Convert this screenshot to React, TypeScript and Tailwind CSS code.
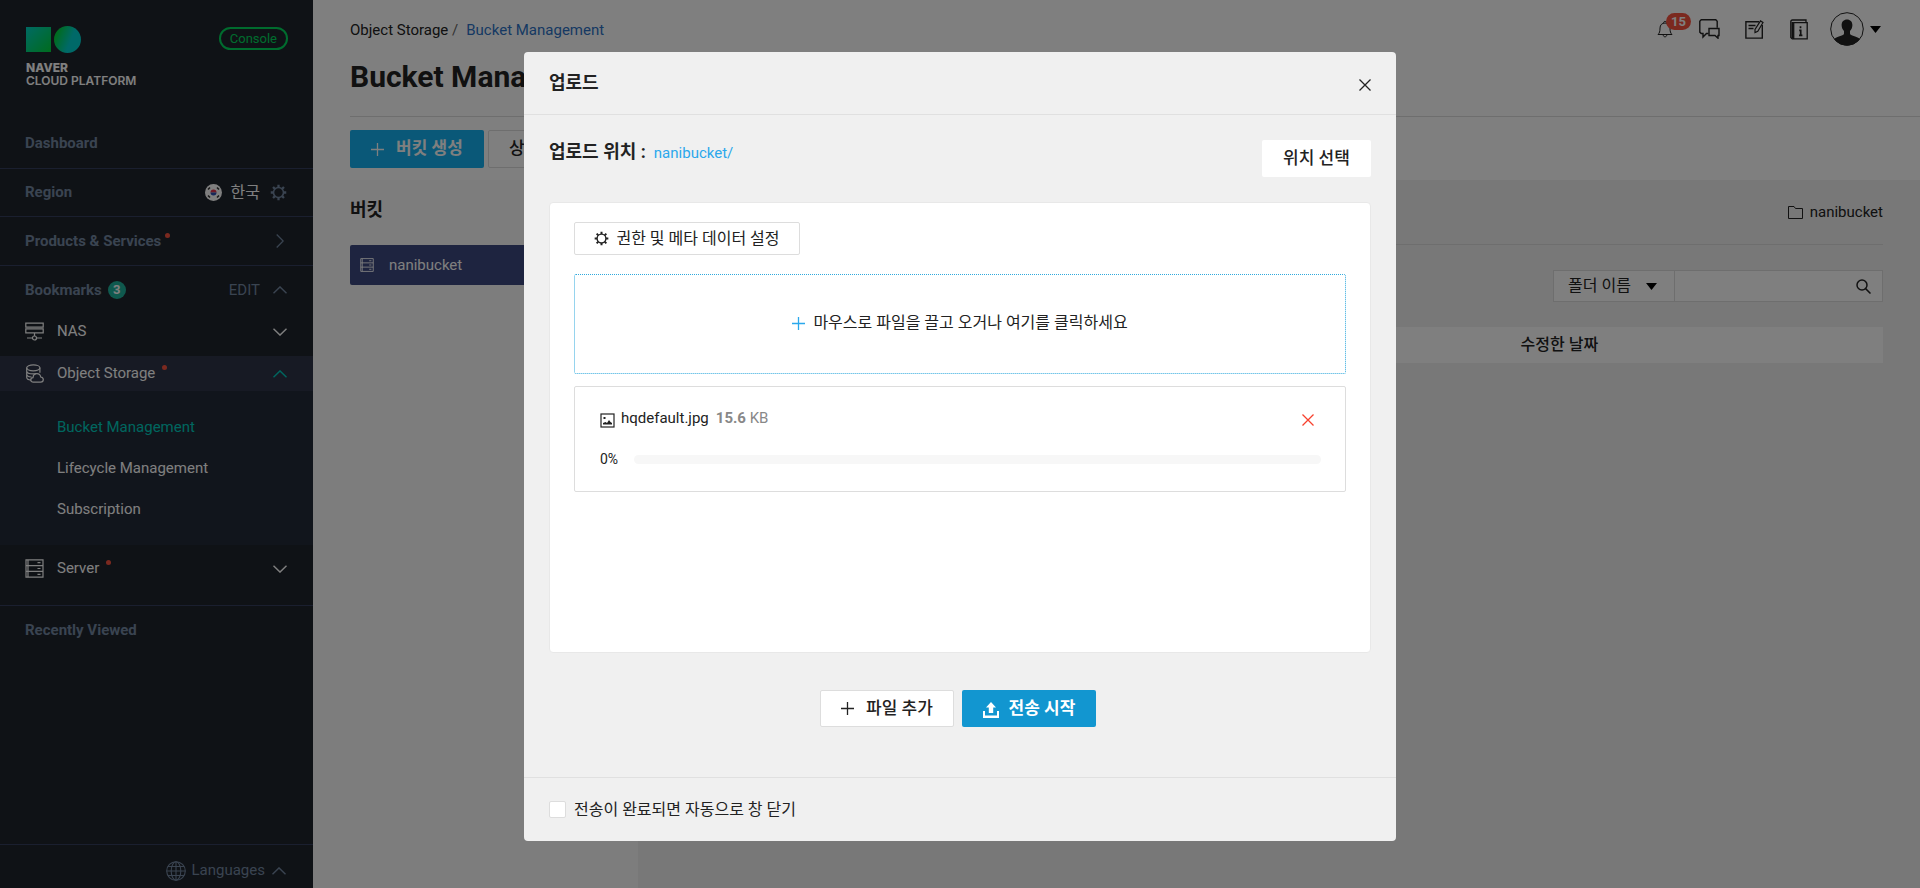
import type { ReactNode } from 'react';

function Chevron({ dir, className = '' }: { dir: 'up' | 'down' | 'right'; className?: string }) {
  if (dir === 'right') {
    return (
      <svg viewBox="0 0 8 14" className={`h-[14px] w-2 ${className}`} fill="none" stroke="currentColor" strokeWidth="1.3">
        <path d="M0.7 0.5 7.2 7 0.7 13.5" />
      </svg>
    );
  }
  return (
    <svg viewBox="0 0 14 8" className={`h-2 w-[14px] ${className}`} fill="none" stroke="currentColor" strokeWidth="1.4">
      <path d={dir === 'up' ? 'M0.5 7.3 7 0.9l6.5 6.4' : 'M0.5 0.7 7 7.1l6.5-6.4'} />
    </svg>
  );
}

function Gear({ className = '' }: { className?: string }) {
  return (
    <svg viewBox="0 0 18 18" className={className} fill="none" stroke="currentColor">
      <circle cx="9" cy="9" r="5.3" strokeWidth="1.7" />
      <path
        strokeWidth="2.4"
        d="M9 3.600V.8M9 14.400v2.800M3.600 9H.8M14.400 9h2.800M5.200 5.200 3.200 3.200M12.800 12.800l2 2M5.200 12.800l-2 2M12.800 5.200l2-2"
      />
    </svg>
  );
}

function Plus({ className = '' }: { className?: string }) {
  return (
    <svg viewBox="0 0 13 13" className={`size-[13px] ${className}`} fill="none" stroke="currentColor" strokeWidth="1.3">
      <path d="M6.5 0v13M0 6.5h13" />
    </svg>
  );
}

function Cross({ className = '' }: { className?: string }) {
  return (
    <svg viewBox="0 0 12 12" className={`size-3 ${className}`} fill="none" stroke="currentColor" strokeWidth="1.3">
      <path d="M0.5 0.5l11 11M11.5 0.5l-11 11" />
    </svg>
  );
}

function Caret() {
  return (
    <svg viewBox="0 0 11 7" className="h-[7px] w-[11px]" fill="currentColor">
      <path d="M0 0h11L5.5 7z" />
    </svg>
  );
}

function NasIcon() {
  return (
    <svg viewBox="0 0 19 19" className="size-[19px]" fill="none" stroke="currentColor" strokeWidth="1.2">
      <path d="M.8 1.1h17.4v4H.8zM.8 6.9h17.4v4H.8zM9.5 11v3M2 16h5.5M11.5 16H17" />
      <circle cx="9.5" cy="16" r="2" />
    </svg>
  );
}

function ObjectStorageIcon() {
  return (
    <svg viewBox="0 0 19 19" className="size-[19px]" fill="none" stroke="currentColor" strokeWidth="1.2">
      <ellipse cx="8.3" cy="3.8" rx="6.6" ry="3" />
      <path d="M1.7 3.8v9.4c0 1.5 2 2.700 4.300 2.900M14.900 3.800v5M1.700 7c0 1.600 2.900 2.900 6.600 2.900 1 0 1.800-.1 2.600-.3M1.700 10.200c0 1.400 2 2.500 4.800 2.800" />
      <path d="M8.300 18.200c-1.500 0-2.500-1-2.500-2.300 0-1.200.9-2.100 2.200-2.200.2-2.300 1.800-4 3.900-4 2 0 3.500 1.400 3.800 3.300 1.500.2 2.600 1.200 2.600 2.600 0 1.500-1.200 2.600-2.700 2.600z" />
    </svg>
  );
}

function ServerIcon({ className = '' }: { className?: string }) {
  return (
    <svg viewBox="0 0 19 19" className={className} fill="none" stroke="currentColor" strokeWidth="1.2">
      <path d="M1 .8h17v17.400H1zM3 .8v17.400M1 6.600h17M1 12.400h17M12.500 3.700h3M12.500 9.500h3M12.500 15.300h3" />
    </svg>
  );
}

function GlobeIcon() {
  return (
    <svg viewBox="0 0 20 20" className="size-5" fill="none" stroke="currentColor" strokeWidth="1.1">
      <circle cx="10" cy="10" r="9.300" />
      <ellipse cx="10" cy="10" rx="4.800" ry="9.300" />
      <path d="M10 .7v18.600M.7 10h18.600M2 5.500h16M2 14.500h16" />
    </svg>
  );
}

function KoreaFlag() {
  return (
    <svg viewBox="0 0 17 17" className="size-[17px]">
      <circle cx="8.5" cy="8.5" r="8.5" fill="#fff" />
      <path d="M5.500 8.500a3 3 0 0 1 6 0z" fill="#e0324b" />
      <path d="M5.500 8.500a3 3 0 0 0 6 0z" fill="#2c4fb0" />
      <path d="M3 5.500 5 3.500M14 5.500l-2-2M3 11.500l2 2M14 11.500l-2 2" stroke="#333" strokeWidth="1.600" />
    </svg>
  );
}

function Logo() {
  return (
    <svg viewBox="0 0 55 27" className="h-[27px] w-[55px]">
      <defs>
        <linearGradient id="sq" x1="0" y1="0" x2="1" y2="1">
          <stop offset="0" stopColor="#00d5c8" />
          <stop offset="1" stopColor="#00d83c" />
        </linearGradient>
        <linearGradient id="ci" x1="0" y1="0.200" x2="1" y2="0.600">
          <stop offset="0.100" stopColor="#00d83c" />
          <stop offset="0.650" stopColor="#00d3d0" />
        </linearGradient>
      </defs>
      <rect y="1" width="25" height="25" fill="url(#sq)" />
      <circle cx="41.500" cy="13.500" r="13.500" fill="url(#ci)" />
    </svg>
  );
}

function RedDot() {
  return <span className="mb-3 ml-1 size-[5px] rounded-full bg-[#f7523f]" />;
}

function SideSection({ children, className = '' }: { children: ReactNode; className?: string }) {
  return (
    <div className={`flex h-12 items-center pr-[26px] pl-[25px] text-[15px] font-bold text-[#7488a2] ${className}`}>
      {children}
    </div>
  );
}

function Sidebar() {
  return (
    <aside className="flex w-[313px] shrink-0 flex-col bg-[#1f252d] text-[15px] text-white">
      <div className="flex h-[118px] items-start justify-between pt-[26px] pr-[25px] pl-[26px]">
        <a href="#home" className="flex flex-col">
          <Logo />
          <span className="mt-2 font-['Inter',sans-serif] text-[12px] leading-[13px] font-extrabold">NAVER</span>
          <span className="font-['Inter',sans-serif] text-[12px] leading-[13px] font-semibold">CLOUD PLATFORM</span>
        </a>
        <a
          href="#console"
          className="mt-px flex h-[23px] items-center rounded-full border-2 border-[#00d85c] px-[9px] text-[13px] text-[#00d85c]"
        >
          Console
        </a>
      </div>

      <SideSection className="h-[50px]">
        <a href="#dashboard">Dashboard</a>
      </SideSection>
      <SideSection className="border-t border-[#353f5f]">
        <span>Region</span>
        <span className="ml-auto flex items-center">
          <KoreaFlag />
          <span className="ml-[9px] text-[16px] font-normal text-white">한국</span>
          <button type="button" aria-label="Region settings" className="ml-[10px]">
            <Gear className="size-[17px]" />
          </button>
        </span>
      </SideSection>
      <SideSection className="h-[49px] border-t border-[#353f5f]">
        <a href="#products">Products &amp; Services</a>
        <RedDot />
        <Chevron dir="right" className="mr-[3px] ml-auto" />
      </SideSection>
      <SideSection className="h-[49px] border-t border-[#353f5f]">
        <span>Bookmarks</span>
        <span className="ml-[6px] flex size-[18px] items-center justify-center rounded-full bg-[#1fb39c] text-[13px] text-white">
          3
        </span>
        <button type="button" className="ml-auto font-normal">
          EDIT
        </button>
        <Chevron dir="up" className="ml-[13px]" />
      </SideSection>

      <nav className="flex flex-col">
        <a href="#nas" className="mb-[7px] flex h-[35px] items-center pr-[26px] pl-[25px]">
          <NasIcon />
          <span className="ml-[13px]">NAS</span>
          <Chevron dir="down" className="ml-auto" />
        </a>
        <a href="#object-storage" className="flex h-[35px] items-center bg-[#2e3448] pr-[26px] pl-[25px]">
          <ObjectStorageIcon />
          <span className="ml-[13px]">Object Storage</span>
          <span className="ml-[3px] flex">
            <RedDot />
          </span>
          <Chevron dir="up" className="ml-auto text-[#00ccbe]" />
        </a>
        <div className="flex flex-col bg-[#232a38] pt-4 pb-[15px] pl-[57px]">
          <a href="#bucket" className="flex h-[41px] items-center text-[#00ccbe]">
            Bucket Management
          </a>
          <a href="#lifecycle" className="flex h-[41px] items-center">
            Lifecycle Management
          </a>
          <a href="#subscription" className="flex h-[41px] items-center">
            Subscription
          </a>
        </div>
        <a href="#server" className="mt-[6px] mb-[19px] flex h-[35px] items-center pr-[26px] pl-[25px]">
          <ServerIcon className="size-[19px]" />
          <span className="ml-[13px]">Server</span>
          <span className="ml-[3px] flex">
            <RedDot />
          </span>
          <Chevron dir="down" className="ml-auto" />
        </a>
      </nav>

      <SideSection className="h-[49px] border-t border-[#353f5f]">Recently Viewed</SideSection>

      <div className="mt-auto flex h-11 items-center justify-end border-t border-[#353f5f] pt-2 pr-[27px] text-[#7488a2]">
        <button type="button" className="flex items-center">
          <GlobeIcon />
          <span className="ml-[6px]">Languages</span>
          <Chevron dir="up" className="ml-[7px]" />
        </button>
      </div>
    </aside>
  );
}

function TopIcons() {
  return (
    <div className="flex items-center text-[#222]">
      <button type="button" aria-label="Notifications" className="relative">
        <svg viewBox="0 0 16 18" className="h-[18px] w-4" fill="none" stroke="currentColor" strokeWidth="1">
          <path d="M1 14.500c1.500-1.500 2-3 2-6.500 0-3 2-5 5-5s5 2 5 5c0 3.500.5 5 2 6.500zM6.500 2.900c0-2 3-2 3 0M6.200 14.800c0 2.700 3.600 2.700 3.600 0" />
        </svg>
        <span className="absolute -top-[7px] left-[9px] flex h-[17px] w-[25px] items-center justify-center rounded-full bg-[#f7523f] text-[13px] font-bold text-white">
          15
        </span>
      </button>
      <button type="button" aria-label="Messages" className="ml-[26px]">
        <svg viewBox="0 0 21 20" className="h-5 w-[21px]" fill="none" stroke="currentColor" strokeWidth="1.400">
          <path d="M9.500 14.500H7.500L4 18v-3.500H2.200l-1.400-1.400V2.200L2.200 .8h14.600l1.400 1.400v6.500" />
          <path d="M10 9.500h10v7h-1v2.700l-3-2.700h-6z" />
        </svg>
      </button>
      <button type="button" aria-label="Notes" className="ml-[25px]">
        <svg viewBox="0 0 19 19" className="size-[19px]" fill="none" stroke="currentColor" strokeWidth="1.400">
          <path d="M14 1.700H.9v16.400h16.400V5M3.500 5.500h7M3.500 8.500h5" />
          <path d="M15.500 .9 10 9.500v3l2.800-1.200L18 2.500z" strokeWidth="1.200" />
        </svg>
      </button>
      <button type="button" aria-label="Guide" className="ml-[26px]">
        <svg viewBox="0 0 18 21" className="h-[21px] w-[18px]" fill="none" stroke="currentColor" strokeWidth="1.300">
          <path d="M3.700 3.700h13.500v16.200H3.700zM16 3.500V1H2.500C1 1 .8 2 .8 3v15.500l1.500 1.400h1.500" />
          <path d="M2.300 3v16.500" strokeWidth="1.600" />
          <path d="M10.500 7.200v2M9.200 11.300h1.500v5M9 16.300h3.400" strokeWidth="1.700" />
        </svg>
      </button>
      <button type="button" aria-label="Account" className="ml-[22px] flex items-center">
        <svg viewBox="0 0 34 34" className="size-[34px]">
          <circle cx="17" cy="17" r="16.300" fill="none" stroke="#222" />
          <path
            fill="#222"
            d="M17 7.500c3.200 0 5.400 2.200 5.400 5.600 0 2.500-1 4.600-2.400 5.900v2.500c0 1.200 1 1.700 3 2.300 3 .9 5.400 1.800 6.800 3.200C27 31 22.500 33.500 17 33.500S7 31 4.200 27c1.400-1.400 3.800-2.300 6.800-3.200 2-.6 3-1.100 3-2.300V19c-1.400-1.300-2.400-3.400-2.400-5.900 0-3.400 2.200-5.600 5.400-5.600z"
          />
        </svg>
        <span className="ml-[6px] text-black">
          <Caret />
        </span>
      </button>
    </div>
  );
}

function MainPage() {
  return (
    <main className="flex min-w-0 flex-1 flex-col bg-white text-[15px] text-[#222]">
      <header className="pl-[37px]">
        <div className="flex h-[58px] items-center justify-between pr-[39px]">
          <p className="pt-[2px]">
            Object Storage <span className="text-[#666]">/</span>
            <a href="#bucket" className="ml-2 text-[#2c72c6]">
              Bucket Management
            </a>
          </p>
          <TopIcons />
        </div>
        <h1 className="h-[58px] text-[30px] leading-[38px] font-bold">Bucket Management</h1>
        <div className="flex h-16 gap-1 border-t border-[#ddd] pt-[13px]">
          <button
            type="button"
            className="flex h-[38px] w-[134px] items-center justify-center gap-3 rounded-[2px] bg-[#14b0f0] text-[17px] font-bold text-white"
          >
            <Plus />
            버킷 생성
          </button>
          <button
            type="button"
            className="h-[38px] rounded-[2px] border border-[#ddd] bg-white px-5 text-[17px] font-medium"
          >
            상품 더 알아보기
          </button>
        </div>
      </header>

      <div className="flex flex-1">
        <section className="w-[325px] bg-[#fafafa] pt-4 pl-[37px]">
          <h2 className="text-[18px] leading-7 font-bold">버킷</h2>
          <a
            href="#nanibucket"
            className="mt-[21px] flex h-10 items-center gap-[15px] rounded-[2px] bg-[#3c4880] pl-[10px] text-white"
          >
            <ServerIcon className="size-[14px]" />
            nanibucket
          </a>
        </section>
        <section className="flex-1 bg-[#f0f0f0] pr-[37px] pl-[37px]">
          <div className="flex h-[65px] items-center justify-end gap-[7px] border-b border-[#ddd]">
            <svg viewBox="0 0 15 13" className="h-[13px] w-[15px]" fill="none" stroke="currentColor" strokeWidth="1">
              <path d="M.5 12.500V.5h5.500l1.500 2h7v10z" />
            </svg>
            nanibucket
          </div>
          <div className="mt-[25px] flex h-8 justify-end">
            <label className="relative flex w-[122px] items-center border border-[#ddd] bg-white text-[16px]">
              <select aria-label="검색 기준" className="w-full appearance-none bg-transparent pl-[14px] outline-none">
                <option>폴더 이름</option>
              </select>
              <span className="pointer-events-none absolute right-[17px] text-black">
                <Caret />
              </span>
            </label>
            <label className="flex w-52 items-center border border-l-0 border-[#ddd] bg-white pr-[11px]">
              <input type="text" aria-label="검색어" className="min-w-0 flex-1 bg-transparent px-2 outline-none" />
              <svg viewBox="0 0 15 15" className="size-[15px]" fill="none" stroke="currentColor" strokeWidth="1.500">
                <circle cx="6" cy="6" r="5" />
                <path d="M9.600 9.600 14.500 14.500" />
              </svg>
            </label>
          </div>
          <table className="mt-[25px] h-9 w-full table-fixed bg-white text-[16px]">
            <thead>
              <tr>
                <td className="w-[70%]" />
                <th className="text-left font-medium">수정한 날짜</th>
              </tr>
            </thead>
          </table>
        </section>
      </div>
    </main>
  );
}

function UploadDialog() {
  return (
    <div className="fixed inset-0 flex items-start justify-center overflow-auto bg-black/50 pt-[52px]">
      <div
        role="dialog"
        aria-modal="true"
        aria-labelledby="upload-title"
        className="w-[872px] max-w-full rounded bg-[#f0f0f0] text-[15px] text-[#222]"
      >
        <div className="flex h-[63px] items-center justify-between border-b border-[#e0e0e0] px-[25px]">
          <h2 id="upload-title" className="pb-[2px] text-[18px] font-bold">
            업로드
          </h2>
          <button type="button" aria-label="닫기" className="mt-1">
            <Cross />
          </button>
        </div>

        <div className="px-[25px] pt-[25px]">
          <div className="flex items-start justify-between">
            <p className="flex items-baseline gap-2">
              <span className="text-[18px] leading-6 font-bold">업로드 위치 :</span>
              <a href="#location" className="text-[#2ba8ec]">
                nanibucket/
              </a>
            </p>
            <button type="button" className="h-[37px] w-[109px] rounded-[2px] bg-white text-[17px] font-medium">
              위치 선택
            </button>
          </div>

          <div className="mt-[25px] h-[451px] rounded border border-[#e8e8e8] bg-white px-6 pt-[19px]">
            <button
              type="button"
              className="flex h-[33px] w-[226px] items-center justify-center gap-[7px] rounded-[2px] border border-[#ddd] text-[16px]"
            >
              <Gear className="size-[15px]" />
              권한 및 메타 데이터 설정
            </button>
            <button
              type="button"
              className="mt-[19px] flex h-[100px] w-full items-center justify-center gap-2 rounded-[2px] border border-dotted border-[#2fa9dd] pb-[2px] text-[16px]"
            >
              <Plus className="text-[#2ba8ec]" />
              마우스로 파일을 끌고 오거나 여기를 클릭하세요
            </button>
            <div className="mt-3 h-[106px] rounded-[2px] border border-[#ddd] px-6 pt-[19px]">
              <div className="flex h-6 items-center">
                <svg viewBox="0 0 15 15" className="mt-1 ml-px size-[15px]">
                  <rect x="1" y="1" width="13" height="13" fill="none" stroke="#222" strokeWidth="1.200" />
                  <path d="M3 11.500V10l2.500-1L7 10l2-3 1.500 2 1.500 1v1.500zM3.500 4h2v2h-2z" fill="#222" />
                </svg>
                <span className="ml-[6px]">hqdefault.jpg</span>
                <span className="ml-[7px] text-[#888]">
                  <b>15.6</b> KB
                </span>
                <button type="button" aria-label="파일 삭제" className="mt-1 mr-[7px] ml-auto text-[#f7412d]">
                  <Cross />
                </button>
              </div>
              <div className="mt-[19px] ml-px flex h-5 items-center gap-4">
                <span className="text-[14px]">0%</span>
                <div
                  role="progressbar"
                  aria-label="hqdefault.jpg"
                  aria-valuenow={0}
                  className="h-[9px] flex-1 rounded-full bg-[#f7f7f7]"
                />
              </div>
            </div>
          </div>

          <div className="mt-[37px] flex justify-center gap-2 pr-1 pb-[50px] text-[17px]">
            <button
              type="button"
              className="flex h-[37px] w-[134px] items-center justify-center gap-3 rounded-[2px] border border-[#ddd] bg-white font-medium"
            >
              <Plus />
              파일 추가
            </button>
            <button
              type="button"
              className="flex h-[37px] w-[134px] items-center justify-center gap-[10px] rounded-[2px] bg-[#1296d0] font-bold text-white"
            >
              <svg viewBox="0 0 16 16" className="mt-[2px] size-4" fill="currentColor">
                <path d="M8 0l5 5.500h-2.800V11H5.800V5.500H3z" />
                <path d="M0 9h2v4.500h12V9h2v7H0z" />
              </svg>
              전송 시작
            </button>
          </div>
        </div>

        <div className="flex h-16 items-center border-t border-[#e0e0e0] px-[25px]">
          <label className="flex items-center gap-2 text-[16px]">
            <input
              type="checkbox"
              className="size-[17px] appearance-none rounded-[2px] border border-[#ddd] bg-white checked:bg-[#1296d0]"
            />
            전송이 완료되면 자동으로 창 닫기
          </label>
        </div>
      </div>
    </div>
  );
}

export default function App() {
  return (
    <div className="flex min-h-screen font-['Roboto','Noto_Sans_CJK_KR',sans-serif]">
      <Sidebar />
      <MainPage />
      <UploadDialog />
    </div>
  );
}
